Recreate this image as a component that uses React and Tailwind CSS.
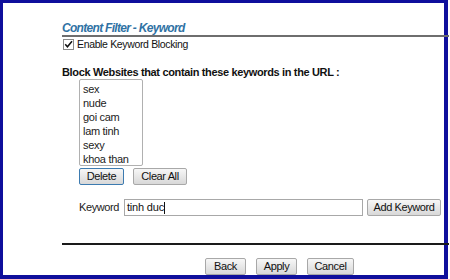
import React from "react";

function Btn({ children, w, focus }) {
  return (
    <div
      className={`h-[17px] ${w} shrink-0 flex items-center justify-center rounded-[2px] border text-[11px] tracking-[-0.4px] leading-none text-[#111] bg-gradient-to-b from-[#f7f7f7] to-[#d8d8d8] ${
        focus ? "border-[#3d7bb0]" : "border-[#a8a8a8]"
      }`}
    >
      {children}
    </div>
  );
}

export default function App() {
  const items = ["sex", "nude", "goi cam", "lam tinh", "sexy", "khoa than"];
  return (
    <div
      className="w-[450px] h-[279px] bg-white overflow-hidden"
      style={{ fontFamily: '"Liberation Sans", Arial, sans-serif' }}
    >
      <div className="w-[448px] h-[279px] border-l-[3px] border-t-[3px] border-r-[4px] border-b-[4px] border-[#0f0f9c] pl-[59px] flex flex-col">
        <div className="shrink-0 mt-[19px] mr-[-5px] border-b-2 border-[#6e6e6e]">
          <div className="text-[12px] tracking-[-0.7px] leading-[13px] font-bold italic text-[#2f72a4]">
            Content Filter - Keyword
          </div>
        </div>
        <div className="shrink-0 mt-[2px] flex items-center h-[11px]">
          <div className="ml-[1px] w-[11px] h-[11px] border border-[#8a8a8a] bg-white flex items-center justify-center">
            <svg width="11" height="11" viewBox="0 0 11 11">
              <path d="M1.5 5.2 L4.2 8.2 L9.8 1.6" fill="none" stroke="#111" strokeWidth="1.9" />
            </svg>
          </div>
          <span className="ml-[3px] text-[10.5px] tracking-[-0.35px] leading-[11px] text-[#111]">Enable Keyword Blocking</span>
        </div>
        <div className="shrink-0 mt-[16px] text-[11px] tracking-[-0.35px] leading-[13px] font-bold text-[#111]">
          Block Websites that contain these keywords in the URL :
        </div>
        <div className="shrink-0 ml-[17px] mt-[0px] w-[64px] h-[87px] border border-[#b0b0b0] rounded-[2px] pt-[2px] pl-[3px]">
          {items.map((t) => (
            <div key={t} className="text-[11px] tracking-[-0.3px] leading-[14px] text-[#222]">
              {t}
            </div>
          ))}
        </div>
        <div className="shrink-0 ml-[17px] mt-[2px] flex gap-[9px]">
          <Btn w="w-[45px]" focus>Delete</Btn>
          <Btn w="w-[54px]">Clear All</Btn>
        </div>
        <div className="shrink-0 ml-[17px] mt-[14px] flex items-center">
          <span className="text-[11px] tracking-[-0.4px] text-[#222] w-[45px]">Keyword</span>
          <div className="w-[239px] h-[17px] border border-[#a8a8a8] flex items-center pl-[2px] text-[11px] tracking-[-0.2px] text-[#111]">
            tinh duc<span className="inline-block w-[1px] h-[12px] bg-[#111]" />
          </div>
          <div className="ml-[4px]">
            <Btn w="w-[74px]">Add Keyword</Btn>
          </div>
        </div>
        <div className="shrink-0 mt-[27px] mr-[-5px] h-[2px] bg-[#1a1a1a]" />
        <div className="shrink-0 mt-[13px] ml-[143px] flex gap-[10px]">
          <Btn w="w-[41px]">Back</Btn>
          <Btn w="w-[41px]">Apply</Btn>
          <Btn w="w-[47px]">Cancel</Btn>
        </div>
      </div>
    </div>
  );
}
